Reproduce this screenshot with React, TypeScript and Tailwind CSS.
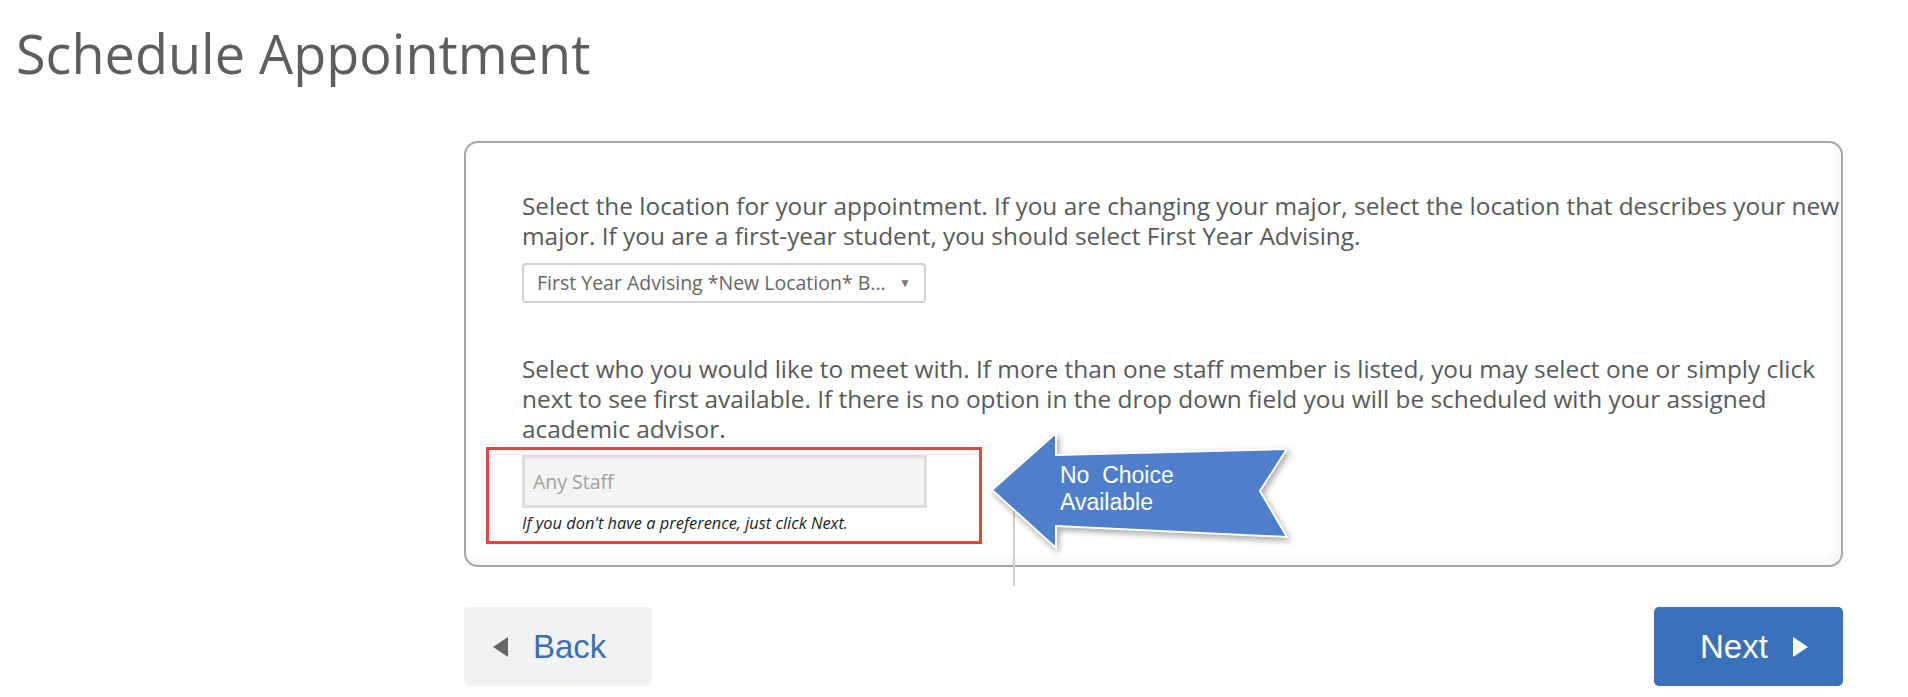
import React from "react";

export default function App() {
  return (
    <div
      className="relative w-[1908px] h-[697px] bg-white overflow-hidden"
      style={{ fontFamily: '"Open Sans", "Noto Sans", sans-serif' }}
    >
      <h1 className="pl-[16px] pt-[24px] text-[54px] leading-[59px] text-[#5e5e5e] font-normal">
        Schedule Appointment
      </h1>

      <div className="ml-[464px] mt-[58px] w-[1379px]">
        <div className="h-[426px] rounded-[14px] border-2 border-[#a6a6a6] bg-white pl-[56px] pt-[48px] shadow-[inset_-6px_-6px_10px_rgba(0,0,0,0.04)]">
          <p className="text-[24.4px] leading-[30px] text-[#595959] whitespace-nowrap">
            Select the location for your appointment. If you are changing your major, select the location that describes your new
            <br />
            major. If you are a first-year student, you should select First Year Advising.
          </p>

          <div className="mt-[12px] flex h-[40px] w-[404px] items-center justify-between rounded-[4px] border-2 border-[#cfcfcf] bg-white pl-[13px] pr-[13px]">
            <span className="text-[19.5px] text-[#666666] whitespace-nowrap">
              First Year Advising *New Location* B...
            </span>
            <span className="text-[12px] text-[#7a7a7a]">▼</span>
          </div>

          <p className="mt-[51px] text-[24.4px] leading-[30px] text-[#595959] whitespace-nowrap">
            Select who you would like to meet with. If more than one staff member is listed, you may select one or simply click
            <br />
            next to see first available. If there is no option in the drop down field you will be scheduled with your assigned
            <br />
            academic advisor.
          </p>

          <div className="mt-[11px] flex h-[53px] w-[405px] items-center border-[3px] border-[#dddddd] bg-[#f3f3f3] pl-[8px]">
            <span className="text-[19.5px] text-[#a0a0a0]">Any Staff</span>
          </div>

          <p className="mt-[5px] text-[16.4px] leading-[20px] italic text-[#1e1e1e]">
            If you don't have a preference, just click Next.
          </p>
        </div>

        <div className="mt-[40px] flex items-center justify-between">
          <button
            className="flex h-[79px] w-[188px] items-center rounded-[5px] bg-[#f0f2f4] pl-[29px] text-[33px] text-[#3b6fb8]"
            style={{ fontFamily: '"Liberation Sans", Arial, sans-serif' }}
          >
            <span className="mr-[25px] inline-block h-0 w-0 border-y-[10px] border-r-[15px] border-y-transparent border-r-[#666666]" />
            Back
          </button>
          <button
            className="flex h-[79px] w-[189px] items-center rounded-[5px] bg-[#3a70b9] pl-[46px] text-[33px] text-white"
            style={{ fontFamily: '"Liberation Sans", Arial, sans-serif' }}
          >
            Next
            <span className="ml-[25px] inline-block h-0 w-0 border-y-[10px] border-l-[15px] border-y-transparent border-l-white" />
          </button>
        </div>
      </div>

      {/* Annotation: red highlight box */}
      <div className="absolute left-[486px] top-[447px] h-[97px] w-[496px] border-[3px] border-[#e5443f]" />

      {/* Annotation: thin connector line */}
      <div className="absolute left-[1013px] top-[500px] h-[86px] w-[2px] bg-[#d0d0d0]" />

      {/* Annotation: arrow */}
      <svg
        className="absolute left-[980px] top-[420px] drop-shadow-[2px_3px_3px_rgba(0,0,0,0.35)]"
        width="320"
        height="145"
        viewBox="0 0 320 145"
      >
        <polygon
          points="12,70 76,13 76,35 307,29 280,71 307,117 76,106 76,128"
          fill="#4f7ecb"
          stroke="#ffffff"
          strokeWidth="2"
          strokeLinejoin="miter"
        />
      </svg>
      <div
        className="absolute left-[1060px] top-[462px] text-[23px] leading-[27px] text-white whitespace-pre"
        style={{ fontFamily: '"Liberation Sans", Arial, sans-serif' }}
      >
        {"No  Choice\nAvailable"}
      </div>
    </div>
  );
}
